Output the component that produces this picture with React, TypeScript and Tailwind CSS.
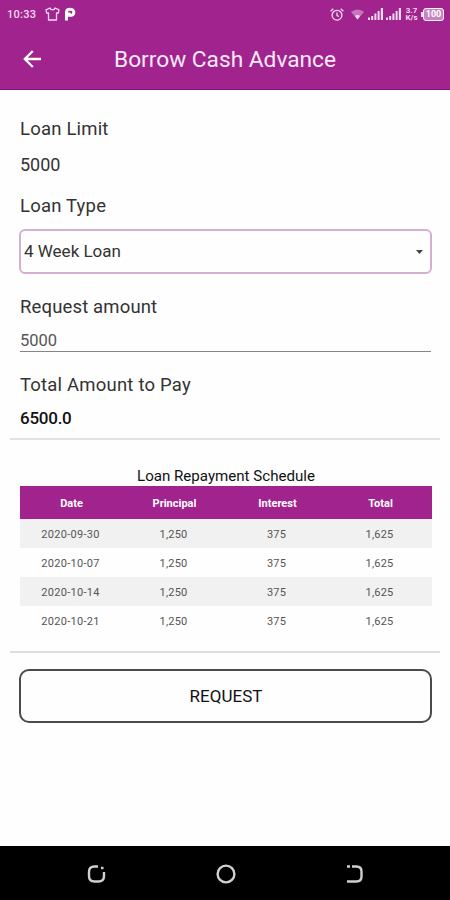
interface Repayment {
  date: string
  principal: string
  interest: string
  total: string
}

const repayments: Repayment[] = [
  { date: "2020-09-30", principal: "1,250", interest: "375", total: "1,625" },
  { date: "2020-10-07", principal: "1,250", interest: "375", total: "1,625" },
  { date: "2020-10-14", principal: "1,250", interest: "375", total: "1,625" },
  { date: "2020-10-21", principal: "1,250", interest: "375", total: "1,625" },
]

const SignalIcon = () => (
  <svg width="15" height="12" viewBox="0 0 15 12" fill="currentColor">
    <path d="M0 9.500h2V12H0zM3.200 8h2v4h-2zM6.400 5.500h2V12h-2zM9.600 3h2v9h-2zM12.800 0h2.200v12h-2.200z" />
  </svg>
)

const StatusBar = () => (
  <div className="flex h-7 items-center pr-[6px] pl-[7px] text-[#f5dcf2]">
    <span className="w-[38px] text-[11px] leading-none font-medium tracking-[0.3px]">10:33</span>

    <svg className="h-[14px] w-[15px]" viewBox="0 0 15 14" fill="none" stroke="currentColor" strokeWidth="1.3" strokeLinejoin="round">
      <path d="M5 1 1 2.8l.7 3.4L3.5 6v7h8V6l1.8.2.7-3.4L10 1C9.4 3.5 5.6 3.5 5 1z" />
    </svg>
    <svg className="ml-[4px] h-[14px] w-[12px]" viewBox="0 0 12 14" fill="none" stroke="white" strokeWidth="3">
      <path d="M2.500 13.500V5C2.500 1.200 9.800 1.200 9.800 5S6.500 8.500 5 8.200V5.500" />
    </svg>

    <div className="ml-auto flex items-center">
      <svg className="h-[13px] w-[14px]" viewBox="0 0 14 13" fill="none" stroke="currentColor" strokeWidth="1.3">
        <circle cx="7" cy="7.2" r="4.9" />
        <path d="M7 4.5v3l2 1M.6 3.2 3.3.8M13.4 3.2 10.7.8" />
      </svg>
      <svg className="ml-[7px] h-[11px] w-[13px]" viewBox="0 0 13 11">
        <path className="opacity-45" d="M0 3C4-.5 9-.5 13 3L6.500 10.500z" fill="currentColor" />
        <path d="M4 7c1.500-1.200 3.500-1.200 5 0l-2.500 3.500z" fill="currentColor" />
      </svg>
      <div className="ml-[4px] flex gap-[3px]">
        <SignalIcon />
        <SignalIcon />
      </div>
      <div className="ml-[4px] flex w-[13px] flex-col items-center text-[8px] leading-[7.5px] font-bold">
        <span>3.7</span>
        <span>K/s</span>
      </div>
      <div className="ml-[3px] flex items-center">
        <span className="h-[5px] w-[2px] bg-current" />
        <span className="flex h-[13px] w-[21px] items-center justify-center rounded-[3px] border border-current bg-[#c983c3] text-[9px] leading-none font-bold text-white">
          100
        </span>
      </div>
    </div>
  </div>
)

const Header = () => (
  <header className="h-[90px] border-b border-[#8c0f80] bg-[#a1238e]">
    <StatusBar />
    <div className="flex h-[62px] items-center pl-[23px]">
      <svg className="h-[18px] w-[18px]" viewBox="0 0 18 18" fill="none" stroke="white" strokeWidth="2.3">
        <path d="M18 9H2M9.800 1 1.800 9l8 8" />
      </svg>
      <h1 className="mt-[3px] ml-[73px] text-[22.7px] leading-none whitespace-nowrap text-[#fbeafa]">
        Borrow Cash Advance
      </h1>
    </div>
  </header>
)

const LoanForm = () => (
  <section className="flex h-[348px] flex-col px-[19px] pt-[25px] text-[#333]">
    <p className="h-[28px] pl-px text-[18.5px] leading-[28px] tracking-[0.2px]">Loan Limit</p>
    <p className="mt-[8px] h-[28px] pl-px text-[18px] leading-[28px]">5000</p>
    <p className="mt-[13px] h-[28px] pl-px text-[18.5px] leading-[28px] tracking-[0.2px]">Loan Type</p>
    <button className="mt-[9px] flex h-[45px] w-[413px] shrink-0 items-center justify-between rounded-[6px] border-2 border-[#d3afd0] pr-[7px] pl-[3px] text-[17px]">
      4 Week Loan
      <svg width="7" height="4" viewBox="0 0 7 4" fill="#444">
        <path d="M0 0h7L3.500 4z" />
      </svg>
    </button>
    <p className="mt-[19px] h-[28px] pl-px text-[18.5px] leading-[28px] tracking-[0.15px]">Request amount</p>
    <div className="mt-[10px] ml-px h-[21px] w-[411px] border-b border-[#858585] text-[16.5px] leading-[20px] text-[#555]">
      5000
    </div>
    <p className="mt-[19px] h-[28px] pl-px text-[18.5px] leading-[28px] tracking-[0.2px]">Total Amount to Pay</p>
    <p className="mt-[6px] h-[28px] pl-px text-[17px] leading-[27px] font-medium tracking-[-0.25px] text-[#111]">6500.0</p>
  </section>
)

const RepaymentSchedule = () => (
  <section className="h-[211px] px-[20px] pt-[26px]">
    <h2 className="h-[20px] pl-[2px] text-center text-[15.1px] leading-[21px] text-[#111]">Loan Repayment Schedule</h2>
    <table className="w-[412px] table-fixed text-center text-[11px] text-[#555]">
      <thead className="bg-[#a1238e] text-white">
        <tr className="h-[33px]">
          <th className="pt-[3px]">Date</th>
          <th className="pt-[3px]">Principal</th>
          <th className="pt-[3px]">Interest</th>
          <th className="pt-[3px]">Total</th>
        </tr>
      </thead>
      <tbody className="tracking-[0.2px]">
        {repayments.map((row) => (
          <tr key={row.date} className="h-[29px] odd:bg-[#f1f1f1]">
            <td className="pt-[4px] pr-[2px] tracking-[0.3px]">{row.date}</td>
            <td className="pt-[4px] pr-[2px]">{row.principal}</td>
            <td className="pt-[4px] pr-[2px]">{row.interest}</td>
            <td className="pt-[4px] pr-[2px]">{row.total}</td>
          </tr>
        ))}
      </tbody>
    </table>
  </section>
)

const NavigationBar = () => (
  <nav className="mt-auto flex h-[54px] items-center justify-between bg-black pt-[2px] pr-[86px] pl-[87px] text-[#d0d0d0]">
    <svg width="20" height="20" viewBox="0 0 20 20" fill="none" stroke="currentColor" strokeWidth="2.4">
      <path d="M11 2.500H7.500Q2 2.500 2 8v4q0 5.500 5.500 5.500h4q5.500 0 5.500-5.500V8" />
      <path d="M14 4H16.500" />
    </svg>
    <svg width="20" height="20" viewBox="0 0 20 20" fill="none" stroke="currentColor" strokeWidth="2.4">
      <circle cx="10" cy="10" r="8.400" />
    </svg>
    <svg width="20" height="20" viewBox="0 0 20 20" fill="none" stroke="currentColor" strokeWidth="2.4">
      <path d="M8 2.500h4.500q5 0 5 5v5q0 5-5 5H3M3 2.500h3" />
    </svg>
  </nav>
)

const App = () => {
  return (
    <main className="flex h-[900px] w-[450px] flex-col overflow-hidden bg-[#fefefe] font-['Roboto',sans-serif]">
      <Header />
      <LoanForm />
      <hr className="mx-[10px] h-[2px] shrink-0 border-0 bg-[#e2e2e2]" />
      <RepaymentSchedule />
      <hr className="mx-[10px] h-[2px] shrink-0 border-0 bg-[#dedede]" />
      <button className="mx-[19px] mt-[16px] h-[54px] w-[413px] shrink-0 rounded-[10px] border-2 border-[#4a4a4a] pt-[2px] pl-px text-[17px] text-[#111]">
        REQUEST
      </button>
      <NavigationBar />
    </main>
  )
}

export default App
